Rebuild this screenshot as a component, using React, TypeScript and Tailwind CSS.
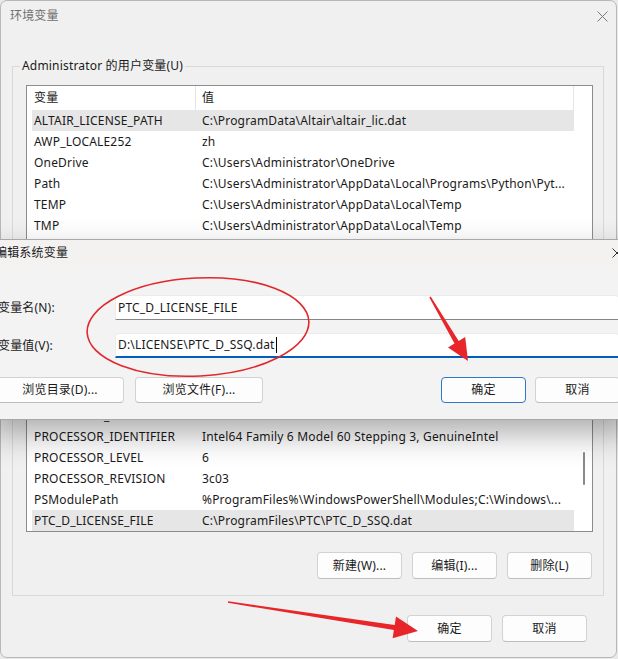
import React from "react";

type RowData = { name: string; value: string; selected?: boolean };

const userRows: RowData[] = [
  { name: "ALTAIR_LICENSE_PATH", value: "C:\\ProgramData\\Altair\\altair_lic.dat", selected: true },
  { name: "AWP_LOCALE252", value: "zh" },
  { name: "OneDrive", value: "C:\\Users\\Administrator\\OneDrive" },
  { name: "Path", value: "C:\\Users\\Administrator\\AppData\\Local\\Programs\\Python\\Pyt..." },
  { name: "TEMP", value: "C:\\Users\\Administrator\\AppData\\Local\\Temp" },
  { name: "TMP", value: "C:\\Users\\Administrator\\AppData\\Local\\Temp" },
];

const sysRows: RowData[] = [
  { name: "NUMBER_OF_PROCESSORS", value: "4" },
  { name: "OS", value: "Windows_NT" },
  { name: "PROCESSOR_ARCHITECTURE", value: "AMD64" },
  { name: "PROCESSOR_IDENTIFIER", value: "Intel64 Family 6 Model 60 Stepping 3, GenuineIntel" },
  { name: "PROCESSOR_LEVEL", value: "6" },
  { name: "PROCESSOR_REVISION", value: "3c03" },
  { name: "PSModulePath", value: "%ProgramFiles%\\WindowsPowerShell\\Modules;C:\\Windows\\..." },
  { name: "PTC_D_LICENSE_FILE", value: "C:\\ProgramFiles\\PTC\\PTC_D_SSQ.dat", selected: true },
];

function Row({ r }: { r: RowData }) {
  return (
    <div
      className={
        r.selected
          ? "flex h-[21px] w-[542px] shrink-0 items-center ml-[5px] bg-[#e6e6e6]"
          : "flex h-[21px] w-[542px] shrink-0 items-center ml-[5px]"
      }
    >
      <div className="w-[170px] shrink-0 pl-[2px] whitespace-nowrap overflow-hidden">{r.name}</div>
      <div className="flex-1 whitespace-nowrap overflow-hidden">{r.value}</div>
    </div>
  );
}

function ListView({ rows, height, thumb }: { rows: RowData[]; height: string; thumb?: boolean }) {
  return (
    <div className={`flex w-[567px] shrink-0 overflow-hidden border border-[#8c8c8c] bg-white ${height}`}>
      <div className="flex w-[547px] shrink-0 flex-col">
        <div className="flex h-[24px] shrink-0 items-center">
          <div className="w-[168px] shrink-0 pl-[7px]">变量</div>
          <div className="h-full w-px bg-[#e5e5e5]" />
          <div className="flex h-full flex-1 items-center border-r border-[#e5e5e5] pl-[6px]">值</div>
        </div>
        {rows.map((r) => (
          <Row key={r.name} r={r} />
        ))}
      </div>
      <div className="flex w-[18px] shrink-0 flex-col items-center">
        {thumb ? <div className="mt-[113px] ml-[1px] h-[33px] w-[2px] rounded-full bg-[#8a8a8a]" /> : null}
      </div>
    </div>
  );
}

function Btn({ label, w, primary }: { label: string; w: string; primary?: boolean }) {
  return (
    <div
      className={
        primary
          ? `flex h-full shrink-0 items-center justify-center rounded-[4px] border border-[#2f78c4] bg-[#fdfdfd] ${w}`
          : `flex h-full shrink-0 items-center justify-center rounded-[4px] border border-[#d2d2d2] border-b-[#bdbdbd] bg-[#fdfdfd] ${w}`
      }
    >
      {label}
    </div>
  );
}

export default function App() {
  return (
    <div className="relative h-[659px] w-[618px] overflow-hidden bg-[#e9e9e9] font-['Noto_Sans','Noto_Sans_CJK_SC',sans-serif] text-[12px] leading-[16px] tracking-[0.18px] text-[#1a1a1a] select-none">
      {/* Main window */}
      <div className="flex h-[658px] w-[617px] flex-col overflow-hidden rounded-[7px] border border-[#b8b8b8] bg-[#f0f0f0]">
        <div className="flex h-[30px] shrink-0 items-center justify-between pl-[9px] pr-[8px]">
          <span className="text-[#6f6f6f]">环境变量</span>
          <svg width="11" height="11" viewBox="0 0 11 11">
            <path d="M0.5 0.5 L10.5 10.5 M10.5 0.5 L0.5 10.5" stroke="#7a7a7a" strokeWidth="1" fill="none" />
          </svg>
        </div>

        {/* User variables group */}
        <fieldset className="ml-[11px] mt-[27px] w-[592px] shrink-0 border border-[#d9d9d9] p-0">
          <legend className="ml-[7px] px-[2px] leading-[16px]">Administrator 的用户变量(U)</legend>
          <div className="flex flex-col pl-[13px] pr-[10px] pt-[11px] pb-[12px]">
            <ListView rows={userRows} height="h-[165px]" />
            <div className="mt-[12px] flex h-[27px] justify-end gap-[10px] pr-[1px]">
              <Btn label="新建(N)..." w="w-[85px]" />
              <Btn label="编辑(E)..." w="w-[85px]" />
              <Btn label="删除(D)" w="w-[85px]" />
            </div>
          </div>
        </fieldset>

        {/* System variables group */}
        <fieldset className="ml-[11px] mt-[8px] w-[592px] shrink-0 border border-[#d9d9d9] p-0">
          <legend className="ml-[7px] px-[2px] leading-[16px]">系统变量(S)</legend>
          <div className="flex flex-col pl-[13px] pr-[10px] pt-[12px] pb-[16px]">
            <ListView rows={sysRows} height="h-[194px]" thumb />
            <div className="mt-[20px] flex h-[27px] justify-end gap-[10px] pr-[1px]">
              <Btn label="新建(W)..." w="w-[85px]" />
              <Btn label="编辑(I)..." w="w-[85px]" />
              <Btn label="删除(L)" w="w-[85px]" />
            </div>
          </div>
        </fieldset>

        <div className="mt-[19px] flex h-[27px] shrink-0 justify-end gap-[10px] pr-[29px]">
          <Btn label="确定" w="w-[85px]" />
          <Btn label="取消" w="w-[85px]" />
        </div>
      </div>

      {/* Edit system variable dialog */}
      <div className="absolute left-[-10px] top-[239px] flex h-[181px] w-[642px] flex-col border border-[#a8a8a8] bg-[#f3f3f3] shadow-[0_14px_30px_rgba(0,0,0,0.32)]">
        <div className="flex h-[25px] shrink-0 items-center justify-between pl-[4px] pr-[9px] bg-[#f4f2f1]">
          <span>编辑系统变量</span>
          <svg width="10" height="10" viewBox="0 0 10 10">
            <path d="M0.5 0.5 L9.5 9.5 M9.5 0.5 L0.5 9.5" stroke="#333" strokeWidth="1" fill="none" />
          </svg>
        </div>

        <div className="mt-[30px] flex h-[25px] shrink-0 items-center">
          <div className="w-[124px] shrink-0 pl-[7px]">变量名(N):</div>
          <div className="mr-[12px] flex h-full flex-1 items-center rounded-t-[4px] border border-[#ececec] border-b-[#868686] bg-white pl-[2px]">
            PTC_D_LICENSE_FILE
          </div>
        </div>

        <div className="mt-[13px] flex h-[25px] shrink-0 items-center">
          <div className="w-[124px] shrink-0 pl-[7px]">变量值(V):</div>
          <div className="mr-[12px] flex h-full flex-1 items-center rounded-t-[4px] border border-[#ececec] border-b-2 border-b-[#005fb8] bg-white pl-[2px]">
            <span>D:\LICENSE\PTC_D_SSQ.dat</span>
            <span className="ml-px h-[16px] w-px bg-black" />
          </div>
        </div>

        <div className="mt-[19px] flex h-[26px] shrink-0 items-stretch justify-between pl-[5px] pr-[11px]">
          <div className="flex gap-[11px]">
            <Btn label="浏览目录(D)..." w="w-[128px]" />
            <Btn label="浏览文件(F)..." w="w-[128px]" />
          </div>
          <div className="flex gap-[9px]">
            <Btn label="确定" w="w-[85px]" primary />
            <Btn label="取消" w="w-[85px]" />
          </div>
        </div>
      </div>

      {/* Red annotations */}
      <svg className="pointer-events-none absolute left-0 top-0" width="618" height="659" viewBox="0 0 618 659">
        <ellipse cx="198" cy="327" rx="111" ry="49" transform="rotate(-3 198 327)" fill="none" stroke="#e0282c" strokeWidth="1.6" />
        <polygon
          points="429.3,297.4 454.5,343.5 448,347.4 468,361 465.2,337 458.7,340.9 430.7,296.6"
          fill="#e8262a"
        />
        <polygon
          points="227.9,602.8 393.9,629.9 392.6,638.3 418,631 396,616.5 394.7,624.9 228.1,601.2"
          fill="#e8262a"
        />
      </svg>
    </div>
  );
}
